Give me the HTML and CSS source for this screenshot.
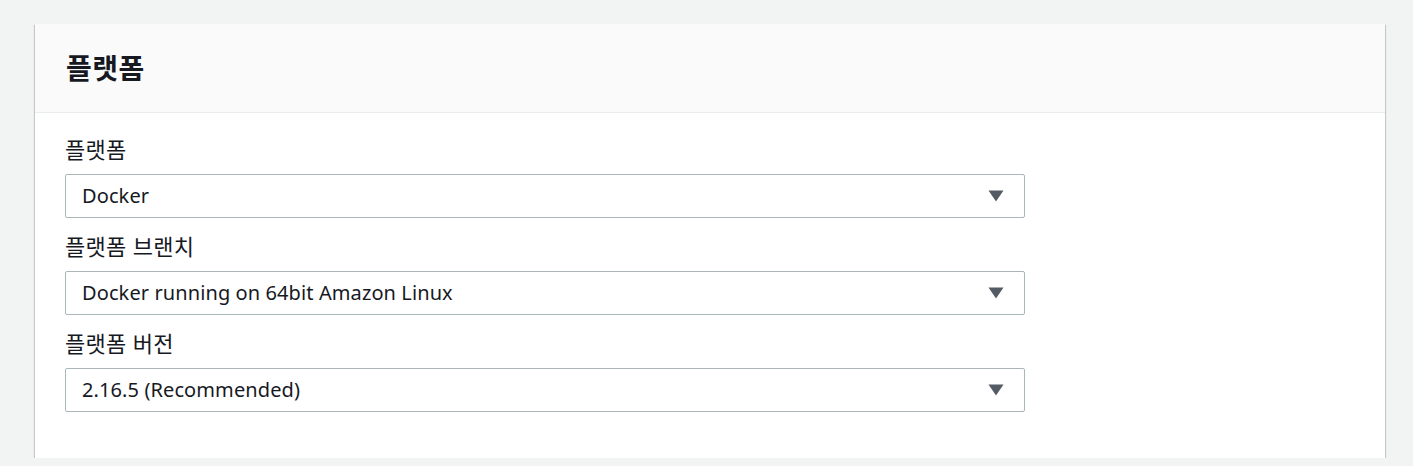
FILE: index.html
```html
<!DOCTYPE html>
<html lang="ko">
<head>
<meta charset="utf-8">
<link rel="stylesheet" href="styles.css">
</head>
<body>
<div class="page">
  <section class="card">
    <header class="card-header">
      <h2 class="card-title">플랫폼</h2>
    </header>
    <div class="card-body">
      <div class="field">
        <div class="label">플랫폼</div>
        <div class="select">
          <span class="value">Docker</span>
          <svg class="caret" width="16" height="12" viewBox="0 0 16 12"><path d="M0.5 0.5 H15.5 L8 11.5 Z" fill="#545b64"/></svg>
        </div>
      </div>
      <div class="field">
        <div class="label">플랫폼 브랜치</div>
        <div class="select">
          <span class="value">Docker running on 64bit Amazon Linux</span>
          <svg class="caret" width="16" height="12" viewBox="0 0 16 12"><path d="M0.5 0.5 H15.5 L8 11.5 Z" fill="#545b64"/></svg>
        </div>
      </div>
      <div class="field">
        <div class="label">플랫폼 버전</div>
        <div class="select">
          <span class="value">2.16.5 (Recommended)</span>
          <svg class="caret" width="16" height="12" viewBox="0 0 16 12"><path d="M0.5 0.5 H15.5 L8 11.5 Z" fill="#545b64"/></svg>
        </div>
      </div>
    </div>
  </section>
</div>
</body>
</html>
```

FILE: styles.css
```css
html, body {
  margin: 0;
  padding: 0;
  background: #f2f3f3;
  font-family: "Noto Sans", "Noto Sans CJK KR", sans-serif;
  color: #16191f;
}
.page {
  padding: 24px 28px 0 35px;
}
.card {
  background: #ffffff;
  box-shadow: 0 1px 1px 0 rgba(0, 28, 36, 0.3), 1px 1px 1px 0 rgba(0, 28, 36, 0.15), -1px 1px 1px 0 rgba(0, 28, 36, 0.15);
}
.card-header {
  background: #fafafa;
  border-bottom: 1px solid #eaeded;
  height: 88px;
  display: flex;
  align-items: center;
  padding: 0 31px;
}
.card-title {
  margin: 0;
  font-size: 28px;
  font-weight: 700;
  line-height: 32px;
  letter-spacing: 0.5px;
  color: #16191f;
}
.card-body {
  padding: 21px 30px 46px;
  display: flex;
  flex-direction: column;
  gap: 13px;
}
.field {
  display: flex;
  flex-direction: column;
  gap: 10px;
}
.label {
  font-size: 22px;
  line-height: 30px;
  letter-spacing: 0.3px;
}
.select {
  box-sizing: border-box;
  width: 960px;
  height: 44px;
  border: 1px solid #aab7b8;
  border-radius: 2px;
  display: flex;
  align-items: center;
  justify-content: space-between;
  padding: 0 20px 0 16px;
  font-size: 20px;
  letter-spacing: 0.1px;
}
.value {
  line-height: 30px;
}
.caret {
  display: block;
}
```
